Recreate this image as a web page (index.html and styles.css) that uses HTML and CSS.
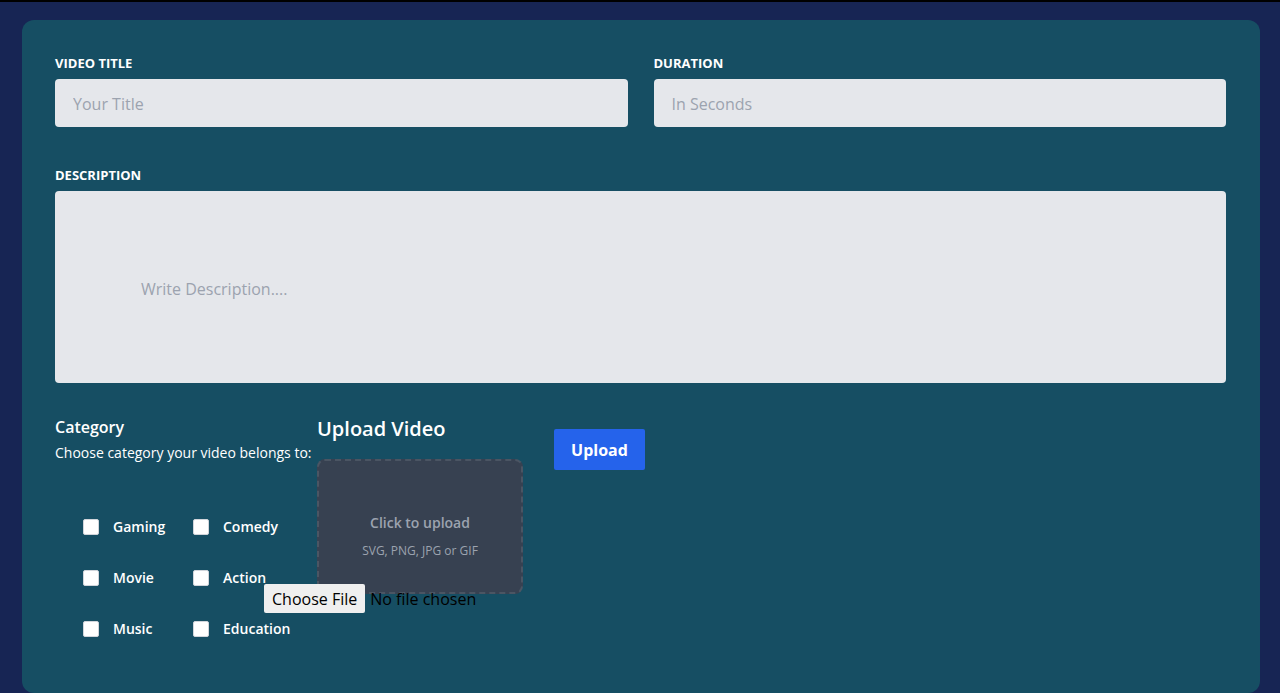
FILE: index.html
```html
<!DOCTYPE html>
<html lang="en">
<head>
<meta charset="utf-8">
<title>Upload Video</title>
<link rel="stylesheet" href="styles.css">
</head>
<body>
<div class="topbar"></div>
<main class="page">
  <form class="card">
    <div class="row">
      <div class="field">
        <label class="label" for="title">VIDEO TITLE</label>
        <input class="input" id="title" type="text" placeholder="Your Title">
      </div>
      <div class="field">
        <label class="label" for="duration">DURATION</label>
        <input class="input" id="duration" type="text" placeholder="In Seconds">
      </div>
    </div>
    <div class="field desc-field">
      <label class="label" for="desc">DESCRIPTION</label>
      <textarea class="textarea" id="desc" placeholder="Write Description...."></textarea>
    </div>
    <div class="bottom">
      <div class="category">
        <h3 class="cat-title">Category</h3>
        <p class="cat-sub">Choose category your video belongs to:</p>
        <div class="checks">
          <label class="check"><input type="checkbox"><span>Gaming</span></label>
          <label class="check"><input type="checkbox"><span>Comedy</span></label>
          <label class="check"><input type="checkbox"><span>Movie</span></label>
          <label class="check"><input type="checkbox"><span>Action</span></label>
          <label class="check"><input type="checkbox"><span>Music</span></label>
          <label class="check"><input type="checkbox"><span>Education</span></label>
        </div>
      </div>
      <div class="upload">
        <h2 class="upload-title">Upload Video</h2>
        <label class="dropzone" for="file">
          <span class="dz-main">Click to upload</span>
          <span class="dz-sub">SVG, PNG, JPG or GIF</span>
        </label>
        <input class="file" id="file" type="file">
      </div>
      <button class="btn" type="button">Upload</button>
    </div>
  </form>
</main>
</body>
</html>
```
FILE: styles.css
```css
* { box-sizing: border-box; }
html, body { margin: 0; padding: 0; }
body {
  background: #172554;
  font-family: "Open Sans", "Noto Sans", sans-serif;
  height: 693px;
  overflow: hidden;
}
.topbar { height: 2px; background: #000; }
.page { padding: 18px 20px 0 22px; }
.card {
  background: #164e63;
  border-radius: 12px;
  padding: 35px 34px 40px 33px;
  height: 673px;
}
.row { display: flex; gap: 26px; }
.field { display: flex; flex-direction: column; flex: 1; }
.label {
  font-size: 13px;
  line-height: 16px;
  font-weight: 700;
  color: #fff;
  margin-bottom: 8px;
}
.input {
  height: 48px;
  border: none;
  border-radius: 4px;
  background: #e5e7eb;
  padding: 1px 18px 0;
  font: inherit;
  font-size: 16px;
  color: #111827;
  outline: none;
}
.input::placeholder, .textarea::placeholder { color: #9ca3af; }
.desc-field { margin-top: 40px; }
.textarea {
  height: 192px;
  border: none;
  border-radius: 4px;
  background: #e5e7eb;
  padding: 86px 86px;
  font: inherit;
  font-size: 16px;
  line-height: 24px;
  resize: none;
  outline: none;
}
.bottom { display: flex; margin-top: 32px; align-items: flex-start; }
.category { width: 262px; color: #fff; }
.cat-title { margin: 0; font-size: 16px; line-height: 24px; font-weight: 600; }
.cat-sub { margin: 4px 0 0; font-size: 14px; line-height: 20px; white-space: nowrap; }
.checks {
  display: grid;
  grid-template-columns: 110px auto;
  row-gap: 35px;
  margin: 56px 0 0 28px;
}
.check { display: flex; align-items: center; gap: 14px; font-size: 14px; font-weight: 600; line-height: 16px; }
.check input {
  appearance: none;
  margin: 0;
  width: 16px; height: 16px;
  background: #fff;
  border: 1px solid #d1d5db;
  border-radius: 2px;
}
.upload { display: flex; flex-direction: column; width: 206px; }
.upload-title { margin: 0; font-size: 20px; line-height: 28px; font-weight: 600; color: #fff; }
.dropzone {
  margin-top: 16px;
  height: 135px;
  border: 2px dashed #4b5563;
  border-radius: 8px;
  background: #374151;
  display: flex;
  flex-direction: column;
  align-items: center;
  justify-content: center;
  gap: 10px;
  padding-top: 18px;
}
.dz-main { font-size: 14px; line-height: 20px; font-weight: 600; color: #9ca3af; }
.dz-sub { font-size: 12px; line-height: 16px; color: #9ca3af; }
.file {
  position: relative;
  margin: -10px 0 0 -53px;
  width: 320px;
  font-family: inherit;
  font-size: 16px;
  color: #000;
}
.file::file-selector-button {
  font: inherit;
  background: #efefef;
  border: none;
  border-radius: 2px;
  padding: 2px 8px;
  height: 29px;
  margin-right: 5px;
  color: #000;
}
.btn {
  margin: 14px 0 0 31px;
  width: 91px; height: 41px;
  background: #2563eb;
  color: #fff;
  border: none;
  border-radius: 2px;
  padding-top: 2px;
  font: inherit;
  font-size: 16px;
  font-weight: 700;
}
```
